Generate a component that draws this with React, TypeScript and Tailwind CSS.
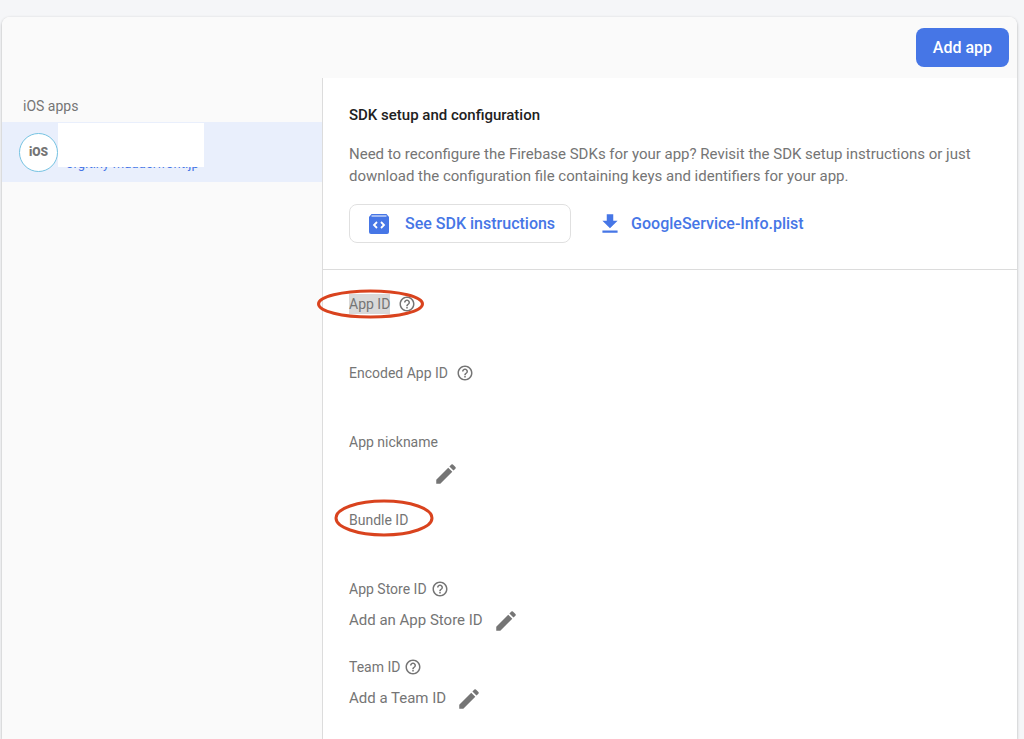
import React from "react";
import { MdEdit, MdGetApp, MdHelpOutline } from "react-icons/md";

type Field = {
  label: string;
  value?: string;
  help?: boolean;
  wideGap?: boolean;
  editable?: boolean;
  selected?: boolean;
  mark?: "wide" | "tall";
};

const fields: Field[] = [
  { label: "App ID", help: true, wideGap: true, selected: true, mark: "wide" },
  { label: "Encoded App ID", help: true, wideGap: true },
  { label: "App nickname", editable: true },
  { label: "Bundle ID", mark: "tall" },
  { label: "App Store ID", value: "Add an App Store ID", help: true, editable: true },
  { label: "Team ID", value: "Add a Team ID", help: true, editable: true },
];

const SdkIcon = () => (
  <svg width="20" height="20" viewBox="0 0 20 20" aria-hidden="true">
    <path fill="#4676e6" d="M2.5 0h15L20 3v15a2 2 0 0 1-2 2H2a2 2 0 0 1-2-2V3z" />
    <path stroke="#fff" strokeWidth="1.2" d="M2.5 2h15" />
    <path fill="none" stroke="#fff" strokeWidth="1.8" d="M8 8 5 11l3 3M12 8l3 3-3 3" />
  </svg>
);

// hand drawn ring around a label
const Mark = ({ kind }: { kind: "wide" | "tall" }) =>
  kind === "wide" ? (
    <svg className="absolute -left-8 -top-[3px] max-w-none" width="108" height="30" viewBox="0 0 108 30" aria-hidden="true">
      <ellipse cx="53.5" cy="15" rx="52" ry="13" fill="none" stroke="#d9431e" strokeWidth="3" />
    </svg>
  ) : (
    <svg className="absolute -left-[15px] -top-[9px] max-w-none" width="100" height="38" viewBox="0 0 100 38" aria-hidden="true">
      <ellipse cx="50" cy="19" rx="48" ry="17" fill="none" stroke="#d9431e" strokeWidth="3" />
    </svg>
  );

const FieldRow = ({ field }: { field: Field }) => (
  <div>
    <dt className={`relative flex h-6 items-center text-sm ${field.wideGap ? "gap-2" : "gap-1"}`}>
      <span className={field.selected ? "bg-[#d9d9d9]" : ""}>{field.label}</span>
      {field.help && (
        <button type="button" aria-label={`About ${field.label}`}>
          <MdHelpOutline size={18} />
        </button>
      )}
      {field.mark && <Mark kind={field.mark} />}
    </dt>
    <dd className={`mt-1 flex items-center gap-[10px] text-[15px] ${field.editable ? "h-[31px]" : "h-[22px]"}`}>
      <span className={field.editable && !field.value ? "w-[74px]" : ""}>{field.value}</span>
      {field.editable && (
        <button type="button" aria-label={`Edit ${field.label}`}>
          <MdEdit size={26} />
        </button>
      )}
    </dd>
  </div>
);

const Sidebar = () => (
  <nav className="w-[321px] shrink-0 border-r border-[#dcdcdc] bg-[#fafafa] pt-4">
    <h2 className="mb-1 px-[21px] text-sm leading-6 text-[#757575]">iOS apps</h2>
    <a href="#ios" className="flex h-15 items-center bg-[#e9effc] pl-[17px]">
      <span className="flex size-[39px] shrink-0 items-center justify-center rounded-full border border-[#76c3e2] bg-white text-xs font-black text-[#757575]">
        iOS
      </span>
      <span className="relative flex h-11 w-[146px] items-end pb-[2px] pl-2 text-[13px] leading-4 whitespace-nowrap text-[#4676e6]">
        org.tiny-madderfront.jp
        <span className="absolute inset-x-0 -top-[7px] bottom-[7px] bg-white" />
      </span>
    </a>
  </nav>
);

export default function App() {
  return (
    <div className="min-h-screen bg-[#f5f6f8] pt-[17px] pr-[7px] pl-[2px] font-['Roboto',sans-serif] text-[#757575]">
      <div className="flex min-h-[calc(100vh-17px)] flex-col overflow-hidden rounded-t-lg bg-white shadow-[0_1px_3px_rgba(0,0,0,0.3)]">
        <header className="flex h-[61px] items-center justify-end bg-[#fafafa] pr-2">
          <button type="button" className="h-[39px] rounded-lg bg-[#4676e6] px-[17px] font-medium text-white">
            Add app
          </button>
        </header>

        <div className="flex grow">
          <Sidebar />
          <main className="min-w-0 grow">
            <section className="border-b border-[#dcdcdc] px-[26px] py-[26px] text-[15px] leading-[22px]">
              <h1 className="font-medium text-[#212121]">SDK setup and configuration</h1>
              <p className="mt-[17px] max-w-[640px]">
                Need to reconfigure the Firebase SDKs for your app? Revisit the SDK setup instructions or just download
                the configuration file containing keys and identifiers for your app.
              </p>
              <div className="mt-[17px] flex items-center gap-[26px] text-base font-medium text-[#4676e6]">
                <a href="#sdk" className="flex h-[39px] items-center gap-4 rounded-lg border border-[#e0e0e0] pr-[15px] pl-[19px]">
                  <SdkIcon />
                  See SDK instructions
                </a>
                <a href="#plist" className="flex items-center gap-2">
                  <MdGetApp size={26} />
                  GoogleService-Info.plist
                </a>
              </div>
            </section>

            <dl className="flex flex-col gap-[19px] px-[26px] pt-[22px]">
              {fields.map((field) => (
                <FieldRow key={field.label} field={field} />
              ))}
            </dl>
          </main>
        </div>
      </div>
    </div>
  );
}
